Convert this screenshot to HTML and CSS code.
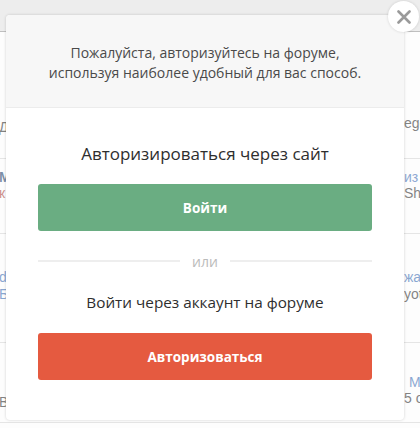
FILE: index.html
```html
<!DOCTYPE html>
<html lang="ru">
<head>
    <meta charset="UTF-8">
    <meta name="viewport" content="width=device-width, initial-scale=1.0">
    <title>Авторизация</title>
    <link rel="stylesheet" href="styles.css">
</head>
<body>
    <div class="page">
        <div class="topbar"></div>
        <div class="row row-1">
            <div class="left"><span class="t-dark">Д</span></div>
            <div class="right"><span class="t-dark">ego</span></div>
        </div>
        <div class="row row-2">
            <div class="left">
                <span class="t-bold">М</span>
                <span class="t-red">к</span>
            </div>
            <div class="right">
                <span class="t-blue">из</span>
                <span class="t-dark">Shy</span>
            </div>
        </div>
        <div class="row row-3">
            <div class="left">
                <span class="t-blue">d</span>
                <span class="t-blue">Б</span>
            </div>
            <div class="right">
                <span class="t-blue">жал</span>
                <span class="t-dark">yot</span>
            </div>
        </div>
        <div class="row row-4">
            <div class="left"><span class="t-dark">В</span></div>
            <div class="right">
                <span class="t-blue indent">Mi</span>
                <span class="t-dark">5 о</span>
            </div>
        </div>
    </div>

    <div class="overlay"></div>

    <div class="modal">
        <div class="modal-head">
            Пожалуйста, авторизуйтесь на форуме,<br>
            используя наиболее удобный для вас способ.
        </div>
        <div class="modal-body">
            <h3 class="title">Авторизироваться через сайт</h3>
            <button class="btn btn-green">Войти</button>
            <div class="divider"><span>или</span></div>
            <h4 class="subtitle">Войти через аккаунт на форуме</h4>
            <button class="btn btn-red">Авторизоваться</button>
        </div>
        <button class="close" aria-label="Закрыть">
            <svg width="14" height="14" viewBox="0 0 14 14">
                <path d="M1.5 1.5 L12.5 12.5 M12.5 1.5 L1.5 12.5" stroke="#9a9a9a" stroke-width="2.6" stroke-linecap="round"/>
            </svg>
        </button>
    </div>
</body>
</html>
```

FILE: styles.css
```css
body {
    margin: 0;
    font-family: "Open Sans", Arial, sans-serif;
    background-color: #ffffff;
    overflow: hidden;
}

.page {
    width: 420px;
    height: 428px;
    font-family: "Liberation Sans", Arial, sans-serif;
    font-size: 14px;
}

.topbar {
    height: 31px;
    background-color: #e2e2e2;
    border-bottom: 1px solid #8f8f8f;
}

.row {
    display: flex;
    justify-content: space-between;
    border-bottom: 1px solid #d4d4d4;
    box-sizing: border-box;
}

.row-1 { height: 127px; }
.row-2 { height: 75px; }
.row-3 { height: 109px; }
.row-4 { height: 80px; }

.left {
    width: 8px;
    margin-left: -1px;
    overflow: hidden;
    display: flex;
    flex-direction: column;
}

.right {
    width: 16px;
    overflow: hidden;
    white-space: nowrap;
    display: flex;
    flex-direction: column;
}

.row-1 .left { padding-top: 87px; }
.row-1 .right { padding-top: 83px; }
.row-2 .left, .row-2 .right { padding-top: 10px; line-height: 16px; }
.row-3 .left, .row-3 .right { padding-top: 35px; line-height: 17px; }
.row-4 .left { padding-top: 51px; }
.row-4 .right { padding-top: 31px; line-height: 16px; }

.indent { padding-left: 5px; }

.t-dark { color: #222; }
.t-blue { color: #2f63b0; }
.t-red { color: #a8362c; }
.t-bold { color: #163a63; font-weight: bold; }

.overlay {
    position: absolute;
    top: 0;
    left: 0;
    width: 420px;
    height: 428px;
    background-color: rgba(250, 250, 250, 0.45);
}

.modal {
    position: absolute;
    top: 15px;
    left: 6px;
    width: 398px;
    height: 405px;
    background: white;
    border-radius: 4px;
    box-shadow: 0 0 3px rgba(0, 0, 0, 0.18);
    text-align: center;
}

.modal-head {
    background-color: #f7f7f7;
    border-bottom: 1px solid #ececec;
    border-radius: 4px 4px 0 0;
    padding: 28px 20px 24px;
    font-size: 14px;
    line-height: 20px;
    color: #4a4a4a;
}

.modal-body {
    padding: 34px 32px 0;
}

.title {
    margin: 0 0 18px;
    font-size: 17px;
    line-height: 24px;
    font-weight: normal;
    color: #2e2e2e;
}

.subtitle {
    margin: 0 0 20px;
    font-size: 15.3px;
    line-height: 22px;
    font-weight: normal;
    color: #2e2e2e;
}

.btn {
    display: block;
    width: 100%;
    height: 47px;
    border: none;
    border-radius: 3px;
    color: white;
    font-family: "Open Sans", Arial, sans-serif;
    font-size: 13.5px;
    font-weight: bold;
    cursor: pointer;
}

.btn-green {
    background-color: #6aad82;
}

.btn-red {
    background-color: #e55a40;
}

.divider {
    display: flex;
    align-items: center;
    gap: 12px;
    margin: 20px 0;
    height: 20px;
    font-size: 14px;
    color: #bbbbbb;
}

.divider::before,
.divider::after {
    content: "";
    flex: 1;
    height: 2px;
    background-color: #eeeeee;
}

.close {
    position: absolute;
    top: -14px;
    right: -15px;
    width: 31px;
    height: 31px;
    padding: 0;
    border: none;
    border-radius: 50%;
    background: white;
    box-shadow: 0 0 3px rgba(0, 0, 0, 0.15);
    display: flex;
    align-items: center;
    justify-content: center;
    cursor: pointer;
}
```
